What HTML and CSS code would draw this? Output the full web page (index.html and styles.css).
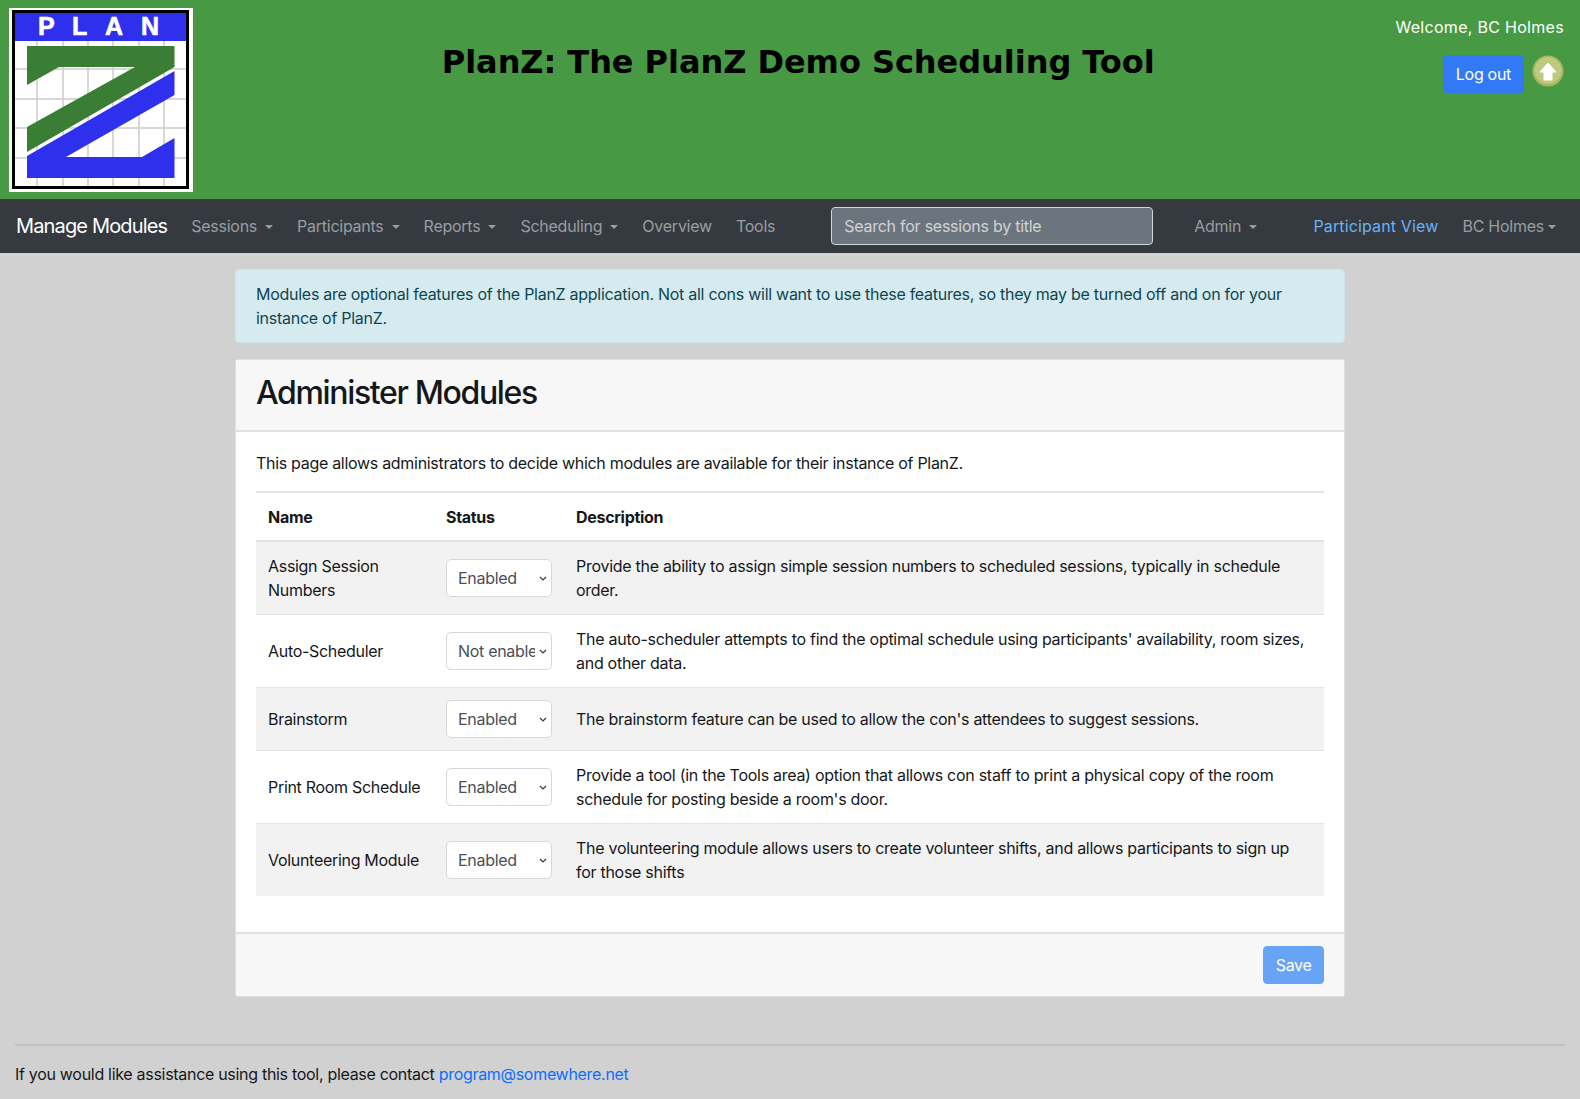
FILE: index.html
```html
<!DOCTYPE html>
<html lang="en">
<head>
<meta charset="utf-8">
<title>Manage Modules</title>
<link rel="stylesheet" href="styles.css">
</head>
<body>
<header class="masthead">
  <svg class="logo" viewBox="0 0 184 184" aria-label="PlanZ logo">
    <rect width="184" height="184" fill="#fff"/>
    <rect x="4.5" y="3.5" width="174" height="176" fill="#fff" stroke="#000" stroke-width="3"/>
    <g stroke="#ccc" stroke-width="1.5">
      <path d="M28 32V178M54 32V178M79 32V178M104 32V178M130 32V178M155 32V178M6 61H177M6 91H177M6 120H177M6 150H177"/>
    </g>
    <rect x="6" y="5" width="171" height="28" fill="#2f2fee"/>
    <text class="logo-text" x="29" y="27">P</text>
    <text class="logo-text" x="63" y="27">L</text>
    <text class="logo-text" x="96" y="27">A</text>
    <text class="logo-text" x="132" y="27">N</text>
    <path d="M18 38H165.5V59L18 144V119L126 59H50L18 77Z" fill="#3a7d34"/>
    <path d="M18 148L165.5 63V87L57 149H133L165.5 130V170H18Z" fill="#2f2fee"/>
  </svg>
  <h1 class="site-title">PlanZ: The PlanZ Demo Scheduling Tool</h1>
  <div class="user-box">
    <div class="welcome">Welcome, BC Holmes</div>
    <div class="user-actions">
      <a class="btn btn-primary" href="#">Log out</a>
      <svg class="up-icon" viewBox="0 0 32 32" aria-hidden="true">
        <circle cx="16" cy="16" r="15.5" fill="#a9b468"/>
        <circle cx="16" cy="15.5" r="13.5" fill="#bfcb7c"/>
        <path d="M16 8L24 17H20V25H12V17H8Z" fill="#fff" stroke="#fff" stroke-width="1" stroke-linejoin="round"/>
      </svg>
    </div>
  </div>
</header>
<nav class="navbar">
  <a class="brand" href="#">Manage Modules</a>
  <ul class="nav-list">
    <li><a class="nav-link caret" href="#">Sessions</a></li>
    <li><a class="nav-link caret" href="#">Participants</a></li>
    <li><a class="nav-link caret" href="#">Reports</a></li>
    <li><a class="nav-link caret" href="#">Scheduling</a></li>
    <li><a class="nav-link" href="#">Overview</a></li>
    <li><a class="nav-link" href="#">Tools</a></li>
  </ul>
  <input class="nav-search" type="text" placeholder="Search for sessions by title">
  <ul class="nav-list nav-admin">
    <li><a class="nav-link caret" href="#">Admin</a></li>
  </ul>
  <ul class="nav-list nav-right">
    <li><a class="nav-link nav-active" href="#">Participant View</a></li>
    <li><a class="nav-link caret caret-tight" href="#">BC Holmes</a></li>
  </ul>
</nav>
<main class="container">
  <div class="alert">Modules are optional features of the PlanZ application. Not all cons will want to use these features, so they may be turned off and on for your instance of PlanZ.</div>
  <section class="card">
    <div class="card-header"><h2>Administer Modules</h2></div>
    <div class="card-body">
      <p>This page allows administrators to decide which modules are available for their instance of PlanZ.</p>
      <table class="table">
        <thead>
          <tr><th class="col-name">Name</th><th class="col-status">Status</th><th>Description</th></tr>
        </thead>
        <tbody>
          <tr>
            <td>Assign Session Numbers</td>
            <td><select class="select"><option>Enabled</option><option>Not enabled</option></select></td>
            <td class="cell-desc">Provide the ability to assign simple session numbers to scheduled sessions, typically in schedule order.</td>
          </tr>
          <tr>
            <td>Auto-Scheduler</td>
            <td><select class="select"><option>Not enabled</option><option>Enabled</option></select></td>
            <td class="cell-desc">The auto-scheduler attempts to find the optimal schedule using participants' availability, room sizes, and other data.</td>
          </tr>
          <tr>
            <td>Brainstorm</td>
            <td><select class="select"><option>Enabled</option><option>Not enabled</option></select></td>
            <td class="cell-desc">The brainstorm feature can be used to allow the con's attendees to suggest sessions.</td>
          </tr>
          <tr>
            <td>Print Room Schedule</td>
            <td><select class="select"><option>Enabled</option><option>Not enabled</option></select></td>
            <td class="cell-desc">Provide a tool (in the Tools area) option that allows con staff to print a physical copy of the room schedule for posting beside a room's door.</td>
          </tr>
          <tr>
            <td>Volunteering Module</td>
            <td><select class="select"><option>Enabled</option><option>Not enabled</option></select></td>
            <td class="cell-desc">The volunteering module allows users to create volunteer shifts, and allows participants to sign up for those shifts</td>
          </tr>
        </tbody>
      </table>
    </div>
    <div class="card-footer"><button class="btn btn-save" type="button">Save</button></div>
  </section>
</main>
<footer class="page-footer">
  <hr>
  <p>If you would like assistance using this tool, please contact <a href="#">program@somewhere.net</a></p>
</footer>
</body>
</html>
```
FILE: styles.css
```css
* { box-sizing: border-box; }
html, body { margin: 0; }
body {
  background: #d1d1d1;
  color: #15181b;
  font: 16px/24px Inter, "Liberation Sans", sans-serif;
  letter-spacing: -0.3px;
}
a { text-decoration: none; }
.masthead {
  display: flex;
  height: 199px;
  background: #479943;
}
.logo { width: 184px; height: 184px; margin: 8px 0 0 9px; flex: none; }
.logo-text { font: 700 25px "Liberation Sans", sans-serif; fill: #fff; stroke: #fff; stroke-width: 0.6px; }
.site-title {
  flex: 1;
  margin: 42px 0 0;
  padding-left: 8px;
  text-align: center;
  font: 700 32px/40px "DejaVu Sans", sans-serif;
  letter-spacing: -0.05px;
  color: #000;
}
.user-box { padding: 15px 16px 0 0; text-align: right; color: #fff; }
.welcome { margin-bottom: 16px; letter-spacing: 0.3px; }
.user-actions { display: flex; align-items: center; justify-content: flex-end; gap: 8px; }
.up-icon { width: 32px; height: 32px; margin-top: -6px; }
.btn {
  display: inline-block;
  padding: 6px 12px;
  border: 1px solid transparent;
  border-radius: 4px;
  font: inherit;
  letter-spacing: inherit;
  color: #fff;
}
.btn-primary { background: #3279f5; }
.btn-save { padding: 6px 11.5px; background: #68a4f6; border-color: #68a4f6; }
.navbar {
  display: flex;
  align-items: center;
  height: 54px;
  padding: 0 12px 0 16px;
  background: #343a40;
  letter-spacing: -0.25px;
}
.brand { color: #fff; font-size: 20px; letter-spacing: -0.85px; margin-right: 12px; white-space: nowrap; }
.nav-list { display: flex; list-style: none; margin: 0; padding: 0; }
.nav-link { display: block; padding: 8px 12px; color: #9a9da0; white-space: nowrap; }
.caret::after {
  content: "";
  display: inline-block;
  margin-left: 8px;
  vertical-align: 3px;
  border-top: 4.8px solid;
  border-left: 4.8px solid transparent;
  border-right: 4.8px solid transparent;
}
.caret-tight::after { margin-left: 4px; }
.nav-search {
  width: 322px;
  height: 38px;
  margin-left: 44px;
  padding: 6px 12px;
  background: #6c757d;
  border: 1px solid #ced4da;
  border-radius: 4px;
  font: inherit;
  letter-spacing: inherit;
  color: #fff;
}
.nav-search::placeholder { color: #d0d3d6; opacity: 1; }
.nav-admin { margin-left: 29px; }
.nav-right { margin-left: auto; }
.nav-active { color: #6cb2f5; letter-spacing: 0.14px; }
.container { width: 1110px; margin: 0 auto; padding-top: 16px; }
.alert {
  padding: 12px 20px;
  margin-bottom: 16px;
  background: #d6ebf0;
  border: 1px solid #c9e4ea;
  border-radius: 4px;
  color: #0e4650;
  letter-spacing: -0.27px;
}
.card {
  background: #fff;
  border: 1px solid #e0e0e0;
  border-radius: 4px;
}
.card-header {
  padding: 10px 20px 14px;
  background: #f7f7f7;
  border-bottom: 2px solid #e2e2e2;
}
.card-header h2 { margin: 0; font-size: 32px; line-height: 46px; font-weight: 500; letter-spacing: -1.35px; }
.card-body { padding: 19px 20px 20px; }
.card-body p { margin: 0 0 16px; }
.table { width: 100%; border-collapse: collapse; margin-bottom: 16px; }
.table th, .table td {
  padding: 12px;
  border-top: 1px solid #e2e3e6;
  text-align: left;
  vertical-align: middle;
}
.table th { padding-bottom: 11px; font-weight: 700; border-top-width: 2px; border-bottom: 2px solid #e2e3e6; }
.table .cell-desc { padding-right: 16px; letter-spacing: -0.28px; }
.table tbody tr:nth-child(odd) { background: #f2f2f2; }
.col-name { width: 178px; }
.col-status { width: 130px; }
.select {
  display: block;
  width: 106px;
  height: 38px;
  padding: 6px 16px 6px 11px;
  appearance: none;
  background: #fff url("data:image/svg+xml,%3Csvg xmlns='http://www.w3.org/2000/svg' width='8' height='5' viewBox='0 0 8 5'%3E%3Cpath d='M1 1l3 3 3-3' fill='none' stroke='%23343a40' stroke-width='1.2'/%3E%3C/svg%3E") no-repeat right 4px center;
  border: 1px solid #d5d9de;
  border-radius: 5px;
  font: inherit;
  letter-spacing: inherit;
  color: #495057;
}
.card-footer {
  display: flex;
  justify-content: flex-end;
  padding: 12px 20px;
  background: #f7f7f7;
  border-top: 2px solid #e2e2e2;
}
.page-footer { padding: 47px 15px 0; }
.page-footer hr { margin: 0 0 16px; border: 0; border-top: 2px solid #c1c1c1; }
.page-footer p { margin: 0; }
.page-footer a { color: #0d6efd; }
```
